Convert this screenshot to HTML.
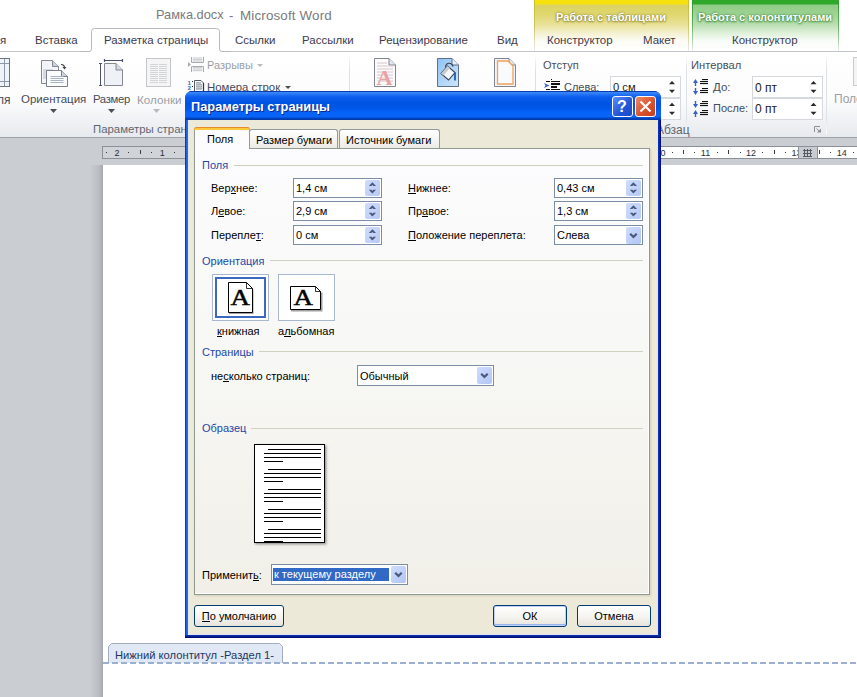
<!DOCTYPE html>
<html><head><meta charset="utf-8">
<style>
*{margin:0;padding:0;box-sizing:border-box}
html,body{width:857px;height:697px;overflow:hidden;background:#fff;font-family:"Liberation Sans",sans-serif;position:relative}
.a{position:absolute}
.t{position:absolute;white-space:nowrap;line-height:1}
#top{left:0;top:0;width:857px;height:52px;background:#fff}
#ribbon{left:0;top:51px;width:857px;height:87px;background:linear-gradient(#fff 0%,#fcfcfd 55%,#eef0f3 85%,#e6e9ed 100%);border-top:1px solid #c5c8cd;border-bottom:1px solid #9ea2a8}
#docbg{left:0;top:138px;width:857px;height:559px;background:#cacdd2}
#page{left:103px;top:165px;width:754px;height:532px;background:#fff}
.wt{color:#3e3a4c;font-size:11.5px}
.rl{color:#444c5a;font-size:12px}
.gl{color:#5f6670;font-size:12px}
#dlg{left:185px;top:91px;width:476px;height:547px;background:#0a2ca8;border-radius:7px 7px 0 0}
#tbar{left:185px;top:91px;width:476px;height:29px;border-radius:7px 7px 0 0;background:linear-gradient(#0a3cb0 0,#0a3cb0 1px,#3b8cf9 1px,#2a78f4 3px,#0a5ded 6px,#0054e3 12px,#0056e8 17px,#0864fa 22px,#0863f6 26px,#0047c4 27px,#0038a4 29px)}
#lb{left:185px;top:120px;width:3px;height:518px;background:linear-gradient(90deg,#0a3ab8 0,#0a3ab8 1px,#1e60e8 1px,#1e60e8 2px,#2a68e4 2px)}
#rb{left:658px;top:120px;width:3px;height:518px;background:linear-gradient(90deg,#0932b8 0,#0932b8 1px,#0026a0 1px,#0026a0 2px,#000e80 2px)}
#bb{left:185px;top:635px;width:476px;height:3px;background:linear-gradient(#0a2da8 0,#0a2da8 1px,#00208f 1px,#00208f 2px,#000c78 2px)}
#client{left:188px;top:120px;width:470px;height:515px;background:#ece9d8;border:1px solid #dfe6f2;border-top:none}
#panel{left:194px;top:148px;width:456px;height:447px;border:1px solid #8f9a92;box-shadow:inset -1px -1px 0 #fff,1px 1px 2px rgba(120,120,100,0.25);background:linear-gradient(#fcfcfe 0%,#f7f7f4 50%,#f1efe8 100%)}
.tab{position:absolute;border:1px solid #919b9c;border-bottom:none;border-radius:3px 3px 0 0;background:linear-gradient(#fff,#ecebe6);font-size:11px}
.dt{position:absolute;white-space:nowrap;line-height:1;font-size:11px;color:#000}
.blue{color:#1d48a8}
.ln{position:absolute;height:1px;background:#d0d0bf}
.inp{position:absolute;background:#fff;border:1px solid #7c8ea6;font-size:11px}
.inp span{position:absolute;left:2px;top:4px;line-height:1;white-space:nowrap}
.spin{position:absolute;right:1px;top:1px;width:15px;height:16px;border-radius:2px;background:linear-gradient(135deg,#cfdcfd,#b7c9f5)}
.dd{position:absolute;right:1px;top:1px;width:15px;height:17px;border-radius:2px;background:linear-gradient(135deg,#cfdcfd,#b2c5f4)}
.btn{position:absolute;border:1px solid #003c74;border-radius:3px;background:linear-gradient(#fff 0%,#f5f4f0 55%,#e6e3da 100%);font-size:11px}
.btn span{position:absolute;left:0;right:0;top:5px;text-align:center;line-height:1}
u{text-decoration:none;border-bottom:1px solid #000;line-height:0.95;display:inline-block}
</style></head><body>
<div id="top" class="a"></div>
<div id="ribbon" class="a"></div>
<div id="docbg" class="a"></div>
<div id="page" class="a"></div>


<!-- ============ RULER & DOC ============ -->
<div class="a" style="left:90px;top:165px;width:13px;height:532px;background:linear-gradient(90deg,#cacdd2,#b9bdc3 70%,#a3a7ad)"></div>
<div class="a" style="left:102px;top:146px;width:755px;height:13px;border:1px solid #8d9197;border-right:none;background:#fff"></div>
<div class="a" style="left:103px;top:147px;width:104px;height:11px;background:#d0d3d8"></div>
<div class="a" style="left:798px;top:147px;width:20px;height:11px;background:#c8cbd0;border-left:1px solid #8d9197;border-right:1px solid #8d9197"></div>
<svg class="a" style="left:0;top:146px" width="857" height="13"><g fill="#3a3d44"><rect x="106" y="6" width="1" height="1"/><rect x="128" y="6" width="1" height="1"/><rect x="140" y="4" width="1" height="4"/><rect x="151" y="6" width="1" height="1"/><rect x="174" y="6" width="1" height="1"/><rect x="185" y="4" width="1" height="4"/><rect x="196" y="6" width="1" height="1"/><rect x="219" y="6" width="1" height="1"/><rect x="230" y="4" width="1" height="4"/><rect x="242" y="6" width="1" height="1"/><rect x="264" y="6" width="1" height="1"/><rect x="275" y="4" width="1" height="4"/><rect x="287" y="6" width="1" height="1"/><rect x="309" y="6" width="1" height="1"/><rect x="321" y="4" width="1" height="4"/><rect x="332" y="6" width="1" height="1"/><rect x="355" y="6" width="1" height="1"/><rect x="366" y="4" width="1" height="4"/><rect x="377" y="6" width="1" height="1"/><rect x="400" y="6" width="1" height="1"/><rect x="411" y="4" width="1" height="4"/><rect x="423" y="6" width="1" height="1"/><rect x="445" y="6" width="1" height="1"/><rect x="457" y="4" width="1" height="4"/><rect x="468" y="6" width="1" height="1"/><rect x="491" y="6" width="1" height="1"/><rect x="502" y="4" width="1" height="4"/><rect x="513" y="6" width="1" height="1"/><rect x="536" y="6" width="1" height="1"/><rect x="547" y="4" width="1" height="4"/><rect x="559" y="6" width="1" height="1"/><rect x="581" y="6" width="1" height="1"/><rect x="593" y="4" width="1" height="4"/><rect x="604" y="6" width="1" height="1"/><rect x="626" y="6" width="1" height="1"/><rect x="638" y="4" width="1" height="4"/><rect x="649" y="6" width="1" height="1"/><rect x="672" y="6" width="1" height="1"/><rect x="683" y="4" width="1" height="4"/><rect x="694" y="6" width="1" height="1"/><rect x="717" y="6" width="1" height="1"/><rect x="728" y="4" width="1" height="4"/><rect x="740" y="6" width="1" height="1"/><rect x="762" y="6" width="1" height="1"/><rect x="774" y="4" width="1" height="4"/><rect x="785" y="6" width="1" height="1"/><rect x="819" y="4" width="1" height="4"/><rect x="830" y="6" width="1" height="1"/><rect x="853" y="6" width="1" height="1"/></g></svg>
<div class="t" style="left:114.4px;top:149px;font-size:9px;color:#2c2e33">2</div>
<div class="t" style="left:159.7px;top:149px;font-size:9px;color:#2c2e33">1</div>
<div class="t" style="left:250.3px;top:149px;font-size:9px;color:#2c2e33">1</div>
<div class="t" style="left:295.6px;top:149px;font-size:9px;color:#2c2e33">2</div>
<div class="t" style="left:340.9px;top:149px;font-size:9px;color:#2c2e33">3</div>
<div class="t" style="left:386.2px;top:149px;font-size:9px;color:#2c2e33">4</div>
<div class="t" style="left:431.5px;top:149px;font-size:9px;color:#2c2e33">5</div>
<div class="t" style="left:476.8px;top:149px;font-size:9px;color:#2c2e33">6</div>
<div class="t" style="left:522.1px;top:149px;font-size:9px;color:#2c2e33">7</div>
<div class="t" style="left:567.4px;top:149px;font-size:9px;color:#2c2e33">8</div>
<div class="t" style="left:612.7px;top:149px;font-size:9px;color:#2c2e33">9</div>
<div class="t" style="left:655.5px;top:149px;font-size:9px;color:#2c2e33">10</div>
<div class="t" style="left:700.8px;top:149px;font-size:9px;color:#2c2e33">11</div>
<div class="t" style="left:746.1px;top:149px;font-size:9px;color:#2c2e33">12</div>
<div class="t" style="left:791.4px;top:149px;font-size:9px;color:#2c2e33;width:6.6px;overflow:hidden">13</div>
<div class="t" style="left:836.7px;top:149px;font-size:9px;color:#2c2e33">14</div>
<svg class="a" style="left:802px;top:148px" width="12" height="10"><path d="M2.5 1v8M5.5 1v8M8.5 1v8M1 2.5h9M1 5.5h9M1 8.5h9" stroke="#555a62"/></svg>

<!-- footer tag -->
<svg class="a" style="left:108px;top:643px" width="176" height="20"><path d="M0.5 20V3.5L3.5 0.5H171.5L174.5 3.5V20" fill="#dfe8f4" stroke="#a3adbd"/></svg>
<div class="t" style="left:115px;top:650px;font-size:11.2px;color:#1e3660">Нижний колонтитул -Раздел 1-</div>
<div class="a" style="left:103px;top:662px;width:754px;height:2px;background:repeating-linear-gradient(90deg,#9aafd2 0 6px,transparent 6px 9px)"></div>

<!-- ============ WORD CHROME ============ -->
<div class="t" style="left:156px;top:9px;font-size:12.8px;color:#7a7a80">Рамка.docx</div>
<div class="t" style="left:229px;top:9px;font-size:13px;color:#7a7a80">-</div>
<div class="t" style="left:240px;top:9px;font-size:13.4px;color:#7a7a80;letter-spacing:0.15px">Microsoft Word</div>
<!-- contextual tabs -->
<div class="a" style="left:534px;top:0;width:154px;height:51px;background:linear-gradient(#f5e10c 0,#f5e10c 4px,#dcd262 5px,#e0d76e 14px,#e8e196 24px,#f4f0d0 33px,#fdfcf5 41px,#fff 51px)"></div>
<div class="a" style="left:692px;top:0;width:147px;height:51px;background:linear-gradient(#2fa82a 0,#2fa82a 4px,#8fcb86 5px,#9ed394 14px,#b9deb0 24px,#dff0da 33px,#f8fcf7 41px,#fff 51px)"></div>
<div class="a" style="left:534px;top:0;width:1px;height:51px;background:linear-gradient(#c9bd2a,#cfc55a 50%,#e2dfc0 85%,#eeeeee)"></div>
<div class="a" style="left:688px;top:0;width:1px;height:51px;background:linear-gradient(#c9bd2a,#cfc55a 50%,#e2dfc0 85%,#eeeeee)"></div>
<div class="a" style="left:692px;top:0;width:1px;height:51px;background:linear-gradient(#2e9a2e,#5ab35a 50%,#b9d8b9 85%,#eeeeee)"></div>
<div class="a" style="left:838px;top:0;width:1px;height:51px;background:linear-gradient(#2e9a2e,#5ab35a 50%,#b9d8b9 85%,#eeeeee)"></div>
<div class="t" style="left:556px;top:12px;font-size:11px;font-weight:bold;color:#fff;text-shadow:0 0 3px #8f8530,0 0 1px #9a9040,0 1px 2px #a09638">Работа с таблицами</div>
<div class="t" style="left:698px;top:12px;font-size:11px;font-weight:bold;color:#fff;text-shadow:0 0 3px #3f8a38,0 0 1px #4a9443,0 1px 2px #4a9443">Работа с колонтитулами</div>
<!-- tab row -->
<div class="a" style="left:0;top:51px;width:857px;height:1px;background:#c2c5ca"></div>
<svg class="a" style="left:80px;top:26px" width="150" height="28"><path d="M9 25.5Q11.5 25.5 11.5 23V5.5Q11.5 2.5 14.5 2.5H136.5Q139.5 2.5 139.5 5.5V23Q139.5 25.5 142 25.5V27H9z" fill="#fff" stroke="none"/><path d="M0 25.5H9Q11.5 25.5 11.5 23V5.5Q11.5 2.5 14.5 2.5H136.5Q139.5 2.5 139.5 5.5V23Q139.5 25.5 142 25.5H150" fill="none" stroke="#b6b9bf"/></svg>
<div class="t wt" style="left:0px;top:35px">я</div>
<div class="t wt" style="left:35px;top:35px">Вставка</div>
<div class="t wt" style="left:104px;top:35px">Разметка страницы</div>
<div class="t wt" style="left:235px;top:35px">Ссылки</div>
<div class="t wt" style="left:302px;top:35px">Рассылки</div>
<div class="t wt" style="left:379px;top:35px">Рецензирование</div>
<div class="t wt" style="left:497px;top:35px">Вид</div>
<div class="t wt" style="left:547px;top:35px">Конструктор</div>
<div class="t wt" style="left:643px;top:35px">Макет</div>
<div class="t wt" style="left:732px;top:35px">Конструктор</div>

<!-- ribbon groups -->
<div class="a" style="left:349px;top:54px;width:1px;height:80px;background:linear-gradient(#fff,#dde0e4 20%,#dde0e4 80%,#fff)"></div>
<div class="a" style="left:535px;top:54px;width:1px;height:80px;background:linear-gradient(#fff,#dde0e4 20%,#dde0e4 80%,#fff)"></div>
<div class="a" style="left:686px;top:54px;width:1px;height:80px;background:linear-gradient(#fff,#dde0e4 20%,#dde0e4 80%,#fff)"></div>
<div class="a" style="left:826px;top:54px;width:1px;height:80px;background:linear-gradient(#fff,#dde0e4 20%,#dde0e4 80%,#fff)"></div>

<div class="t rl" style="left:-3px;top:94px">ля</div>
<div class="t rl" style="left:21px;top:94px;font-size:11.5px">Ориентация</div>
<div class="t rl" style="left:93px;top:94px;font-size:11.3px;letter-spacing:-0.3px">Размер</div>
<div class="t gl" style="left:137px;top:94px;color:#9a9ea4;font-size:11.7px">Колонки</div>
<div class="t gl" style="left:93px;top:124px;font-size:11.4px">Параметры стран</div>
<div class="t gl" style="left:207px;top:60px;color:#9a9ea4;font-size:11px">Разрывы</div>
<div class="t rl" style="left:207px;top:82px;font-size:11.4px">Номера строк</div>
<svg class="a" style="left:0;top:52px" width="857" height="85">
  <!-- dropdown arrows -->
  <path d="M50 57h7l-3.5 4z M108 57h7l-3.5 4z" fill="#4a4e56"/>
  <path d="M153 57h7l-3.5 4z" fill="#b7bbc0"/>
  <path d="M257 12h6l-3 3z" fill="#b7bbc0"/>
  <path d="M285 34h6l-3 3z" fill="#4a4e56"/>
  <!-- fields icon (partial) -->
  <rect x="-8" y="6.5" width="17.5" height="28" fill="#eef2f9" stroke="#6f757e"/>
  <path d="M-8 11.5h17 M-8 29.5h17 M4.5 7v27" stroke="#8d98a8"/>
  <!-- orientation icon -->
  <path d="M41.5 8.5h11l6 6v17h-17z" fill="#f3f5f9" stroke="#85888f"/>
  <path d="M52.5 8.5v6h6" fill="#c9d3e0" stroke="#85888f"/>
  <path d="M43 18h10M43 20h10M43 22h10M43 24h10M43 26h10" stroke="#b9c0cc"/>
  <path d="M46.5 18.5h15l6 6v10h-21z" fill="#fafbfd" stroke="#7d8088"/>
  <path d="M61.5 18.5v6h6" fill="#c9d3e0" stroke="#7d8088"/>
  <path d="M50.5 24.5h13M50.5 26.5h13M50.5 28.5h13M50.5 30.5h13" stroke="#a9b2c2"/>
  <path d="M61 12.5c2 0 3.5 1 3.5 3.5" fill="none" stroke="#3a3f4a" stroke-width="1.2"/>
  <path d="M62.5 15l2 2.5 2-2.5z" fill="#3a3f4a"/>
  <!-- size icon -->
  <path d="M100.5 11v23 M99 11.5h3 M99 33.5h3" stroke="#4a5070"/>
  <path d="M104.5 8.5h18 M104.5 7v3 M122.5 7v3" stroke="#4a5070" stroke-width="1.2"/>
  <path d="M104.5 11.5h11.5l6.5 6.5v15.5h-18z" fill="#eef1f6" stroke="#84878f"/>
  <path d="M116 11.5v6.5h6.5" fill="#d3d9e3" stroke="#84878f"/>
  <!-- columns icon (disabled) -->
  <rect x="146.5" y="6.5" width="24" height="28" fill="#f5f5f6" stroke="#c4c6ca"/>
  <path d="M150 12.5h8M159 12.5h8M150 14.5h8M159 14.5h8M150 16.5h8M159 16.5h8M150 18.5h8M159 18.5h8M150 20.5h8M159 20.5h8M150 22.5h8M159 22.5h8M150 24.5h8M159 24.5h8M150 26.5h8M159 26.5h8M150 28.5h8M159 28.5h8M150 30.5h8M159 30.5h8" stroke="#d3d5d9"/>
  <!-- breaks icon (disabled) -->
  <path d="M191.5 5v5.5h12v-5.5" fill="#f4f4f5" stroke="#a9acb1"/>
  <path d="M193 6h9M193 7.5h9M193 9h9" stroke="#cdd0d4"/>
  <path d="M191.5 20v-5.5h12v5.5" fill="#f4f4f5" stroke="#a9acb1"/>
  <path d="M193 15.5h9M193 17h9M193 18.5h9" stroke="#cdd0d4"/>
  <path d="M188 10l3 2.5-3 2.5z" fill="#a9acb1"/>
  <!-- line numbers icon -->
  <path d="M194.5 28.5h6.5l2.5 2.5v12h-9z" fill="#fafbfc" stroke="#555b66"/>
  <path d="M203.5 31v12" stroke="#2a2f38" stroke-width="1.2"/>
  <path d="M196 30.9h5M196 32.9h6M196 34.9h6M196 36.9h6" stroke="#7a808c"/>
  <text x="187.8" y="32.5" font-size="5.5" font-weight="bold" fill="#2858b0" font-family="Liberation Sans">1</text>
  <text x="187.8" y="37.5" font-size="5.5" font-weight="bold" fill="#2858b0" font-family="Liberation Sans">2</text>
  <rect x="192" y="29" width="1" height="1" fill="#222"/><rect x="192" y="34" width="1" height="1" fill="#222"/>
  <!-- watermark icon -->
  <path d="M374.5 6.5h14.5l6.5 6.5v21.5h-21z" fill="#fbfbfc" stroke="#80858f"/>
  <path d="M389 6.5v6.5h6.5" fill="#e3e7ee" stroke="#80858f"/>
  <path d="M377 11h10M377 14h16M377 17h16M377 20h16M377 23h16M377 26h16M377 29h16" stroke="#d8c6cc"/>
  <text x="0" y="0" transform="translate(376.5 32.5) scale(1.05 1)" font-size="21" fill="#e8a3a3" font-family="Liberation Serif" font-weight="bold">A</text>
  <!-- page color icon -->
  <defs><linearGradient id="pc" x1="0" y1="0" x2="1" y2="1"><stop offset="0" stop-color="#8fc3f5"/><stop offset="1" stop-color="#cfe5fb"/></linearGradient></defs>
  <path d="M437.5 6.5h14.5l6.5 6.5v21.5h-21z" fill="url(#pc)" stroke="#5f7189"/>
  <path d="M452 6.5v6.5h6.5" fill="#e6eef8" stroke="#5f7189"/>
  <path d="M441 21.5l6.5-7.5 7.5 6.5-6.5 7.5z" fill="#f6f6f6" stroke="#3d424b" stroke-width="1.1"/>
  <path d="M441 21.5l6.5-7.5 2.5 2-6.5 7.5z" fill="#c8ccd2"/>
  <path d="M445.5 15.5c0-5 6-6 7.5-1" fill="none" stroke="#3d424b" stroke-width="1.1"/>
  <path d="M455 20.5v8" stroke="#1f5fb0" stroke-width="1.8"/>
  <!-- page borders icon -->
  <path d="M494.5 6.5h14.5l6.5 6.5v21.5h-21z" fill="#f4f5f8" stroke="#80858f"/>
  <path d="M509 6.5v6.5h6.5" fill="#e3e7ee" stroke="#80858f"/>
  <path d="M497.5 9h10.5l5 5v18h-15.5z" fill="#f9fafc" stroke="#eda25a" stroke-width="1.3"/>
</svg>

<!-- indent / spacing -->
<svg class="a" style="left:0;top:0" width="857" height="140">
  <g fill="#111">
   <rect x="551" y="79" width="1" height="1"/>
   <rect x="546" y="81" width="4" height="1"/><rect x="551" y="81" width="9" height="1"/>
   <rect x="551" y="83" width="9" height="2"/><rect x="551" y="86" width="6" height="2"/>
   <rect x="546" y="89" width="4" height="1"/><rect x="551" y="89" width="9" height="1"/>
   <rect x="702" y="79" width="6" height="1.1"/><rect x="700" y="81" width="8" height="1.1"/><rect x="700" y="83" width="8" height="1.1"/>
   <rect x="702" y="88" width="6" height="1.1"/><rect x="700" y="90" width="8" height="1.1"/><rect x="700" y="92" width="8" height="1.1"/>
   <rect x="702" y="101" width="6" height="1.1"/><rect x="700" y="103" width="8" height="1.1"/><rect x="700" y="105" width="8" height="1.1"/>
   <rect x="702" y="110" width="6" height="1.1"/><rect x="700" y="112" width="8" height="1.1"/><rect x="700" y="114" width="8" height="1.1"/>
  </g>
  <g fill="#3a60c0">
   <path d="M544 83l5.5 2.5-5.5 2.5 1.5-2.5z"/>
   <path d="M693 83l2.5-4 2.5 4z"/><rect x="694.8" y="82" width="1.4" height="4"/>
   <path d="M693 91l2.5 4 2.5-4z"/><rect x="694.8" y="88" width="1.4" height="4"/>
   <path d="M693 104l2.5 4 2.5-4z"/><rect x="694.8" y="101" width="1.4" height="4"/>
   <path d="M693 114l2.5-4 2.5 4z"/><rect x="694.8" y="113" width="1.4" height="4"/>
  </g>
</svg>
<div class="t gl" style="left:543px;top:60px;color:#4a4e58;font-size:11px">Отступ</div>
<div class="t gl" style="left:691px;top:60px;color:#4a4e58;font-size:11.2px">Интервал</div>
<div class="t rl" style="left:564px;top:82px;font-size:11px">Слева:</div>
<div class="t rl" style="left:713px;top:82px;font-size:11.5px">До:</div>
<div class="t rl" style="left:713px;top:103px;font-size:11px">После:</div>
<div class="a" style="left:610px;top:76px;width:71px;height:22px;border:1px solid #d5d8dd;background:#fff"></div>
<div class="a" style="left:610px;top:98px;width:71px;height:22px;border:1px solid #d5d8dd;background:#fff"></div>
<div class="a" style="left:752px;top:76px;width:71px;height:22px;border:1px solid #d5d8dd;background:#fff"></div>
<div class="a" style="left:752px;top:98px;width:71px;height:22px;border:1px solid #d5d8dd;background:#fff"></div>
<div class="t rl" style="left:613px;top:82px;color:#222;font-size:11.2px">0 см</div>
<div class="t rl" style="left:755px;top:82px;color:#222">0 пт</div>
<div class="t rl" style="left:755px;top:103px;color:#222">0 пт</div>
<div class="t gl" style="left:656px;top:124px">Абзац</div>
<div class="t gl" style="left:834px;top:93px;color:#9a9ea4">Поле</div>
<svg class="a" style="left:0;top:52px" width="857" height="85">
  <path d="M669 32.2h6l-3-3.2z M669 37.8h6l-3 3.2z M669 54h6l-3-3.2z M669 59.8h6l-3 3.2z" fill="#2a2a2a"/>
  <path d="M810.5 32.2h6l-3-3.2z M810.5 37.8h6l-3 3.2z M810.5 54h6l-3-3.2z M810.5 59.8h6l-3 3.2z" fill="#2a2a2a"/>
  
  
  
  
  <path d="M814.5 80V74.5H820" fill="none" stroke="#8a9098"/><path d="M816.5 76.5l3.5 3.5" stroke="#8a9098"/><path d="M817 80.5h4v-4z" fill="#8a9098"/>
  <rect x="853.5" y="5.5" width="10" height="28" fill="#f4f4f5" stroke="#c9cbcf"/>
</svg>


<!-- ============ DIALOG ============ -->
<div id="dlg" class="a"></div>
<div id="tbar" class="a"></div>
<div class="t" style="left:191px;top:101px;font-size:12.8px;font-weight:bold;color:#fff;text-shadow:1px 1px #0a2a88">Параметры страницы</div>
<!-- help / close -->
<div class="a" style="left:612px;top:96px;width:21px;height:21px;border:1px solid #fff;border-radius:3px;background:linear-gradient(135deg,#5b8ef8,#2254d8 60%,#1d48c8)"></div>
<div class="t" style="left:617px;top:99px;font-size:16px;font-weight:bold;color:#fff">?</div>
<div class="a" style="left:635px;top:96px;width:21px;height:21px;border:1px solid #fff;border-radius:3px;background:linear-gradient(135deg,#f08a6c,#d9522c 55%,#c2411e)"></div>
<svg class="a" style="left:635px;top:96px" width="21" height="21"><path d="M5.5 5.5 L15.5 15.5 M15.5 5.5 L5.5 15.5" stroke="#fff" stroke-width="2.2"/></svg>
<div id="client" class="a"></div>
<div id="lb" class="a"></div><div id="rb" class="a"></div><div id="bb" class="a"></div>

<div id="panel" class="a"></div>
<div class="tab" style="left:249px;top:129px;width:89px;height:19px"></div>
<div class="tab" style="left:339px;top:129px;width:101px;height:19px"></div>
<div class="tab" style="left:194px;top:127px;width:56px;height:22px;background:#fcfcfe;border-top:none"></div>
<div class="a" style="left:194px;top:127px;width:56px;height:3px;background:#ffc83c;border-radius:3px 3px 0 0;border-top:1px solid #e68b2c"></div>
<div class="dt" style="left:207px;top:134px">Поля</div>
<div class="dt" style="left:256px;top:135px">Размер бумаги</div>
<div class="dt" style="left:346px;top:135px">Источник бумаги</div>

<!-- Поля -->
<div class="dt blue" style="left:202px;top:160px">Поля</div>
<div class="ln" style="left:234px;top:165px;width:409px"></div>

<div class="dt" style="left:211px;top:183px">Вер<u>х</u>нее:</div>
<div class="dt" style="left:211px;top:206px">Л<u>е</u>вое:</div>
<div class="dt" style="left:211px;top:230px">Перепле<u>т</u>:</div>
<div class="inp" style="left:293px;top:178px;width:89px;height:20px"><span>1,4 см</span><svg class="spin" width="15" height="16" viewBox="0 0 15 16"><path d="M3.8 6L7.4 2.2L11 6H8.4L7.4 5L6.4 6z M3.8 9.8L7.4 13.6L11 9.8H8.4L7.4 10.8L6.4 9.8z" fill="#46597d"/></svg></div>
<div class="inp" style="left:293px;top:201px;width:89px;height:20px"><span>2,9 см</span><svg class="spin" width="15" height="16" viewBox="0 0 15 16"><path d="M3.8 6L7.4 2.2L11 6H8.4L7.4 5L6.4 6z M3.8 9.8L7.4 13.6L11 9.8H8.4L7.4 10.8L6.4 9.8z" fill="#46597d"/></svg></div>
<div class="inp" style="left:293px;top:225px;width:89px;height:20px"><span>0 см</span><svg class="spin" width="15" height="16" viewBox="0 0 15 16"><path d="M3.8 6L7.4 2.2L11 6H8.4L7.4 5L6.4 6z M3.8 9.8L7.4 13.6L11 9.8H8.4L7.4 10.8L6.4 9.8z" fill="#46597d"/></svg></div>

<div class="dt" style="left:408px;top:183px"><u>Н</u>ижнее:</div>
<div class="dt" style="left:408px;top:206px">Пр<u>а</u>вое:</div>
<div class="dt" style="left:408px;top:230px"><u>П</u>оложение переплета:</div>
<div class="inp" style="left:554px;top:178px;width:89px;height:20px"><span>0,43 см</span><svg class="spin" width="15" height="16" viewBox="0 0 15 16"><path d="M3.8 6L7.4 2.2L11 6H8.4L7.4 5L6.4 6z M3.8 9.8L7.4 13.6L11 9.8H8.4L7.4 10.8L6.4 9.8z" fill="#46597d"/></svg></div>
<div class="inp" style="left:554px;top:201px;width:89px;height:20px"><span>1,3 см</span><svg class="spin" width="15" height="16" viewBox="0 0 15 16"><path d="M3.8 6L7.4 2.2L11 6H8.4L7.4 5L6.4 6z M3.8 9.8L7.4 13.6L11 9.8H8.4L7.4 10.8L6.4 9.8z" fill="#46597d"/></svg></div>
<div class="inp" style="left:554px;top:225px;width:89px;height:20px"><span>Слева</span><svg class="dd" width="15" height="18" viewBox="0 0 15 18"><path d="M4 7.2L7.45 10.6L10.9 7.2" fill="none" stroke="#46597d" stroke-width="2.4"/></svg></div>

<!-- Ориентация -->
<div class="dt blue" style="left:202px;top:256px">Ориентация</div>
<div class="ln" style="left:270px;top:260px;width:373px"></div>
<div class="a" style="left:212px;top:274px;width:57px;height:47px;border:1px solid #a9b8cf;background:#fff"></div>
<div class="a" style="left:215px;top:277px;width:51px;height:41px;border:2px solid #3c68c0"></div>
<div class="a" style="left:278px;top:274px;width:57px;height:47px;border:1px solid #a9b8cf;background:#fff"></div>
<svg class="a" style="left:212px;top:274px" width="124" height="48">
  <path d="M40.5 15.5v23.5h-23.5" fill="none" stroke="#a0a0a0" stroke-width="2"/>
  <path d="M16.5 8.5h18l6 6v24h-24z" fill="#fff" stroke="#000"/>
  <path d="M34.5 8.5v6h6" fill="none" stroke="#000" stroke-width="0.8"/>
  <text x="0" y="0" transform="translate(18.6 31) scale(1.17 1)" font-family="Liberation Serif" font-size="23" fill="#000" stroke="#000" stroke-width="0.5">A</text>
  <path d="M109.5 18.5v18h-30.5" fill="none" stroke="#a0a0a0" stroke-width="2"/>
  <path d="M78.5 12.5h25l5 5v18h-30z" fill="#fff" stroke="#000"/>
  <path d="M103.5 12.5v5h5" fill="none" stroke="#000" stroke-width="0.8"/>
  <text x="0" y="0" transform="translate(81.6 31) scale(1.17 1)" font-family="Liberation Serif" font-size="23" fill="#000" stroke="#000" stroke-width="0.5">A</text>
</svg>
<div class="dt" style="left:217px;top:326px"><u>к</u>нижная</div>
<div class="dt" style="left:278px;top:326px">а<u>л</u>ьбомная</div>

<!-- Страницы -->
<div class="dt blue" style="left:202px;top:347px">Страницы</div>
<div class="ln" style="left:259px;top:351px;width:384px"></div>
<div class="dt" style="left:211px;top:371px">не<u>с</u>колько страниц:</div>
<div class="inp" style="left:357px;top:365px;width:137px;height:21px"><span style="top:5px">Обычный</span><svg class="dd" width="15" height="18" viewBox="0 0 15 18"><path d="M4 7.2L7.45 10.6L10.9 7.2" fill="none" stroke="#46597d" stroke-width="2.4"/></svg></div>

<!-- Образец -->
<div class="dt blue" style="left:202px;top:423px">Образец</div>
<div class="ln" style="left:251px;top:428px;width:392px"></div>
<div class="a" style="left:254px;top:444px;width:71px;height:99px;background:#fff;box-shadow:1px 1px 2px rgba(0,0,0,0.35),2px 2px 3px rgba(0,0,0,0.12)"></div>
<svg class="a" style="left:254px;top:444px" width="71" height="99"><path d="M14 5.5H67 M10 9.5H67 M10 13.5H67 M10 17.5H29 M14 25.5H67 M10 29.5H67 M10 33.5H67 M10 37.5H29 M14 45.5H67 M10 49.5H67 M10 53.5H67 M10 57.5H29 M14 65.5H67 M10 69.5H67 M10 73.5H67 M10 77.5H29 M14 85.5H67 M10 89.5H67 M10 93.5H67 M10 97.5H29" stroke="#000" stroke-width="1.1"/><rect x="0.5" y="0.5" width="70" height="98" fill="none" stroke="#000"/></svg>

<div class="dt" style="left:202px;top:570px">Применит<u>ь</u>:</div>
<div class="inp" style="left:271px;top:564px;width:137px;height:21px"><svg class="dd" width="15" height="18" viewBox="0 0 15 18"><path d="M4 7.2L7.45 10.6L10.9 7.2" fill="none" stroke="#46597d" stroke-width="2.4"/></svg></div>
<div class="a" style="left:273px;top:568px;width:116px;height:13px;background:#316ac5"></div>
<div class="dt" style="left:274px;top:569px;color:#fff">к текущему разделу</div>

<div class="btn" style="left:194px;top:605px;width:90px;height:22px"><span><u>П</u>о умолчанию</span></div>
<div class="btn" style="left:493px;top:605px;width:74px;height:22px;box-shadow:inset 0 0 0 1px #c2d1f6,inset 0 -1px 0 1px #98b4ef"><span>ОК</span></div>
<div class="btn" style="left:577px;top:605px;width:74px;height:22px"><span>Отмена</span></div>
</body></html>
